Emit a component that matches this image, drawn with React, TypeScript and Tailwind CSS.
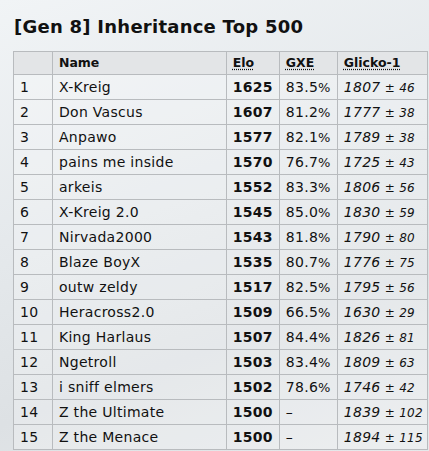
import React from 'react'

type Row = {
  rank: number
  name: string
  elo: number
  gxe: string | null
  glicko: number
  dev: number
}

const ROWS: Row[] = [
  { rank: 1, name: 'X-Kreig', elo: 1625, gxe: '83.5', glicko: 1807, dev: 46 },
  { rank: 2, name: 'Don Vascus', elo: 1607, gxe: '81.2', glicko: 1777, dev: 38 },
  { rank: 3, name: 'Anpawo', elo: 1577, gxe: '82.1', glicko: 1789, dev: 38 },
  { rank: 4, name: 'pains me inside', elo: 1570, gxe: '76.7', glicko: 1725, dev: 43 },
  { rank: 5, name: 'arkeis', elo: 1552, gxe: '83.3', glicko: 1806, dev: 56 },
  { rank: 6, name: 'X-Kreig 2.0', elo: 1545, gxe: '85.0', glicko: 1830, dev: 59 },
  { rank: 7, name: 'Nirvada2000', elo: 1543, gxe: '81.8', glicko: 1790, dev: 80 },
  { rank: 8, name: 'Blaze BoyX', elo: 1535, gxe: '80.7', glicko: 1776, dev: 75 },
  { rank: 9, name: 'outw zeldy', elo: 1517, gxe: '82.5', glicko: 1795, dev: 56 },
  { rank: 10, name: 'Heracross2.0', elo: 1509, gxe: '66.5', glicko: 1630, dev: 29 },
  { rank: 11, name: 'King Harlaus', elo: 1507, gxe: '84.4', glicko: 1826, dev: 81 },
  { rank: 12, name: 'Ngetroll', elo: 1503, gxe: '83.4', glicko: 1809, dev: 63 },
  { rank: 13, name: 'i sniff elmers', elo: 1502, gxe: '78.6', glicko: 1746, dev: 42 },
  { rank: 14, name: 'Z the Ultimate', elo: 1500, gxe: null, glicko: 1839, dev: 102 },
  { rank: 15, name: 'Z the Menace', elo: 1500, gxe: null, glicko: 1894, dev: 115 },
]

const cell = 'border border-[#b8bbbe] pl-[6px] pr-[4px] align-middle whitespace-nowrap'

export default function App() {
  return (
    <div
      className="h-[451px] w-[429px] overflow-hidden bg-[linear-gradient(160deg,#f1f4f6_0%,#e5e9ec_40%,#dde1e4_70%,#e6e9eb_100%)] text-[#111]"
      style={{ fontFamily: '"DejaVu Sans", Verdana, sans-serif' }}
    >
      <h1 className="pl-[14px] pt-[16px] text-[18px] font-bold leading-[22px] tracking-[0.25px]">
        [Gen 8] Inheritance Top 500
      </h1>
      <table className="ml-[13px] mt-[13px] w-[415px] border-collapse text-[14px] tracking-[0.3px]">
        <thead>
          <tr className="h-[23px] bg-[#e3e5e7] text-[12.5px] font-bold tracking-normal">
            <th className={`${cell} w-[39px]`}></th>
            <th className={`${cell} w-[174px] text-left`}>Name</th>
            <th className={`${cell} w-[53px] text-left`}>
              <abbr className="underline decoration-dotted underline-offset-2">Elo</abbr>
            </th>
            <th className={`${cell} w-[58px] text-left`}>
              <abbr className="underline decoration-dotted underline-offset-2">GXE</abbr>
            </th>
            <th className={`${cell} text-left`}>
              <abbr className="underline decoration-dotted underline-offset-2">Glicko-1</abbr>
            </th>
          </tr>
        </thead>
        <tbody>
          {ROWS.map((r) => (
            <tr key={r.rank} className="h-[25px] bg-white/25">
              <td className={cell}>{r.rank}</td>
              <td className={cell}>{r.name}</td>
              <td className={`${cell} font-bold`}>{r.elo}</td>
              <td className={cell}>
                {r.gxe ? (
                  <>
                    {r.gxe}
                    <small className="text-[13px]">%</small>
                  </>
                ) : (
                  '–'
                )}
              </td>
              <td className={cell}>
                <em>
                  {r.glicko}
                  <small className="text-[12px]"> ± {r.dev}</small>
                </em>
              </td>
            </tr>
          ))}
        </tbody>
      </table>
    </div>
  )
}
